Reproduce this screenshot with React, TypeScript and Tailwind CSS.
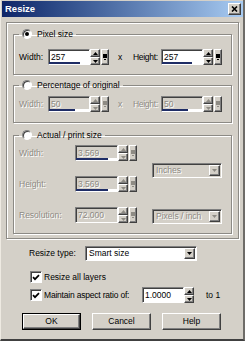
import type { ReactNode } from "react"

const raised =
  "border border-t-white border-l-white border-r-[#404040] border-b-[#404040] shadow-[inset_-1px_-1px_0_#808080] bg-[#d4d0c8]"
const sunken = "border border-[#808080] border-r-white border-b-white shadow-[inset_1px_1px_0_#404040]"
const grayText = "text-[#8e8b84] [text-shadow:1px_1px_0_#fff]"

function Tri({ down, gray }: { down?: boolean; gray?: boolean }) {
  return (
    <svg width="5" height="3" viewBox="0 0 5 3">
      <path d={down ? "M0 0h5L2.5 3z" : "M0 3h5L2.5 0z"} fill={gray ? "#8e8b84" : "#000"} />
    </svg>
  )
}

function Spin({ gray }: { gray?: boolean }) {
  return (
    <div className="flex w-[10px] flex-col">
      <div className={`flex flex-1 items-center justify-center ${raised}`}>
        <Tri gray={gray} />
      </div>
      <div className={`flex flex-1 items-center justify-center ${raised}`}>
        <Tri down gray={gray} />
      </div>
    </div>
  )
}

function Popup({ gray }: { gray?: boolean }) {
  return (
    <div className={`ml-px flex w-[8px] items-center justify-center ${raised}`}>
      <svg width="4" height="6" viewBox="0 0 4 6">
        <rect x="0" y="0" width="4" height="4" fill={gray ? "#8e8b84" : "#000"} />
        <rect x="1" y="5" width="2" height="1" fill={gray ? "#8e8b84" : "#000"} />
      </svg>
    </div>
  )
}

function Field({
  value,
  w,
  bar,
  disabled,
}: {
  value: string
  w: string
  bar?: string
  disabled?: boolean
}) {
  return (
    <div
      className={`flex h-[16px] flex-col ${sunken} ${w} ${disabled ? `bg-[#d4d0c8] ${grayText}` : "bg-white"}`}
    >
      <span className="flex-1 pl-[2px] pt-[2px] leading-[10px]">{value}</span>
      {bar && (
        <div className="h-[2px] bg-white">
          <div className={`h-full bg-[#1f2d66] ${bar}`} />
        </div>
      )}
    </div>
  )
}

function SpinField(props: { value: string; w: string; bar?: string; disabled?: boolean; popup?: boolean }) {
  return (
    <div className="flex h-[16px]">
      <Field {...props} />
      <Spin gray={props.disabled} />
      {props.popup !== false && <Popup gray={props.disabled} />}
    </div>
  )
}

function Combo({ value, w, disabled }: { value: string; w: string; disabled?: boolean }) {
  return (
    <div
      className={`flex h-[15px] items-center ${sunken} ${w} ${disabled ? `bg-[#d4d0c8] ${grayText}` : "bg-white"}`}
    >
      <span className="flex-1 pl-[3px]">{value}</span>
      <div className={`mr-px flex h-[11px] w-[11px] items-center justify-center ${raised}`}>
        <Tri down gray={disabled} />
      </div>
    </div>
  )
}

function Radio({ checked }: { checked?: boolean }) {
  return (
    <span className="flex h-[10px] w-[10px] items-center justify-center rounded-full border border-[#808080] border-r-white border-b-white bg-white shadow-[inset_1px_1px_0_#404040]">
      {checked && <span className="h-[4px] w-[4px] rounded-full bg-black" />}
    </span>
  )
}

function Check() {
  return (
    <span className={`flex h-[12px] w-[12px] items-center justify-center bg-white ${sunken}`}>
      <svg width="8" height="7" viewBox="0 0 8 7">
        <path d="M1 3.2l2 2 4-4" stroke="#000" strokeWidth="1.7" fill="none" />
      </svg>
    </span>
  )
}

function Group({
  label,
  checked,
  className,
  children,
}: {
  label: string
  checked?: boolean
  className: string
  children: ReactNode
}) {
  return (
    <fieldset className={`border border-[#8c8a85] shadow-[1px_1px_0_#fff,inset_1px_1px_0_#fff] px-[5px] ${className}`}>
      <legend className="flex h-[10px] items-center gap-[5px] px-[3px] leading-[10px]">
        <Radio checked={checked} />
        <span>{label}</span>
      </legend>
      {children}
    </fieldset>
  )
}

function Button({ label, def }: { label: string; def?: boolean }) {
  return (
    <div className={`h-[17px] w-[59px] ${def ? "border border-black" : ""}`}>
      <div className={`flex h-full w-full items-center justify-center ${raised}`}>{label}</div>
    </div>
  )
}

export default function App() {
  return (
    <div className="h-[341px] w-[245px] overflow-hidden border-l border-r-2 border-b-2 border-l-[#eeeae2] border-r-[#6e6c68] border-b-[#404040] bg-[#d4d0c8] pl-px pt-px font-['Liberation_Sans',Arial,sans-serif] text-[8.5px] leading-none text-black">
      {/* title bar */}
      <div className="flex h-[16px] items-center justify-between bg-linear-to-r from-[#0f2568] to-[#a9ccf2] pl-[3px] pr-[2px]">
        <span className="text-[9.5px] font-bold text-white">Resize</span>
        <div className={`flex h-[12px] w-[13px] items-center justify-center ${raised}`}>
          <svg width="7" height="6" viewBox="0 0 7 6">
            <path d="M1 0.5l5 5M6 0.5l-5 5" stroke="#000" strokeWidth="1.6" />
          </svg>
        </div>
      </div>

      {/* size frame */}
      <div className="mt-[5px] ml-[4px] w-[233px] border border-[#8c8a85] px-[6px] pt-[6px] pb-[4px] shadow-[1px_1px_0_#fff,inset_1px_1px_0_#fff]">
        <Group label="Pixel size" checked className="pt-[10px] pb-[9px]">
          <div className="flex items-center">
            <span className="w-[29px]">Width:</span>
            <SpinField value="257" w="w-[42px]" bar="w-[78%]" />
            <span className="w-[24px] pl-[9px]">x</span>
            <span className="w-[28px] tracking-[-0.3px]">Height:</span>
            <SpinField value="257" w="w-[42px]" bar="w-[76%]" />
          </div>
        </Group>

        <Group label="Percentage of original" className="mt-[5px] pt-[6px] pb-[10px]">
          <div className={`flex items-center ${grayText}`}>
            <span className="w-[29px]">Width:</span>
            <SpinField value="50" w="w-[42px]" bar="w-[64%]" disabled />
            <span className="w-[24px] pl-[9px]">x</span>
            <span className="w-[28px] tracking-[-0.3px]">Height:</span>
            <SpinField value="50" w="w-[42px]" bar="w-[64%]" disabled />
          </div>
        </Group>

        <Group label="Actual / print size" className="mt-[7px] pt-[5px] pb-[9px]">
          <div className="flex">
            <div className={`flex flex-col gap-[15px] ${grayText}`}>
              <div className="flex items-center">
                <span className="w-[56px]">Width:</span>
                <SpinField value="3.569" w="w-[43px]" bar="w-[77%]" disabled />
              </div>
              <div className="flex items-center">
                <span className="w-[56px]">Height:</span>
                <SpinField value="3.569" w="w-[43px]" bar="w-[77%]" disabled />
              </div>
              <div className="flex items-center">
                <span className="w-[56px]">Resolution:</span>
                <SpinField value="72.000" w="w-[43px]" disabled />
              </div>
            </div>
            <div className="ml-[15px] flex flex-col pt-[18px]">
              <Combo value="Inches" w="w-[70px]" disabled />
              <div className="mt-[31px]">
                <Combo value="Pixels / inch" w="w-[70px]" disabled />
              </div>
            </div>
          </div>
        </Group>
      </div>

      {/* options */}
      <div className="mt-[7px] flex items-center pl-[27px]">
        <span className="w-[56px]">Resize type:</span>
        <Combo value="Smart size" w="w-[112px]" />
      </div>
      <div className="mt-[10px] flex items-center gap-[2px] pl-[28px]">
        <Check />
        <span>Resize all layers</span>
      </div>
      <div className="mt-[4px] flex items-center pl-[28px]">
        <Check />
        <span className="ml-[2px] w-[98px] tracking-[-0.2px]">Maintain aspect ratio of:</span>
        <SpinField value="1.0000" w="w-[42px]" popup={false} />
        <span className="ml-[12px]">to 1</span>
      </div>

      {/* buttons */}
      <div className="mt-[10px] flex gap-[11px] pl-[20px]">
        <Button label="OK" def />
        <Button label="Cancel" />
        <Button label="Help" />
      </div>
    </div>
  )
}
